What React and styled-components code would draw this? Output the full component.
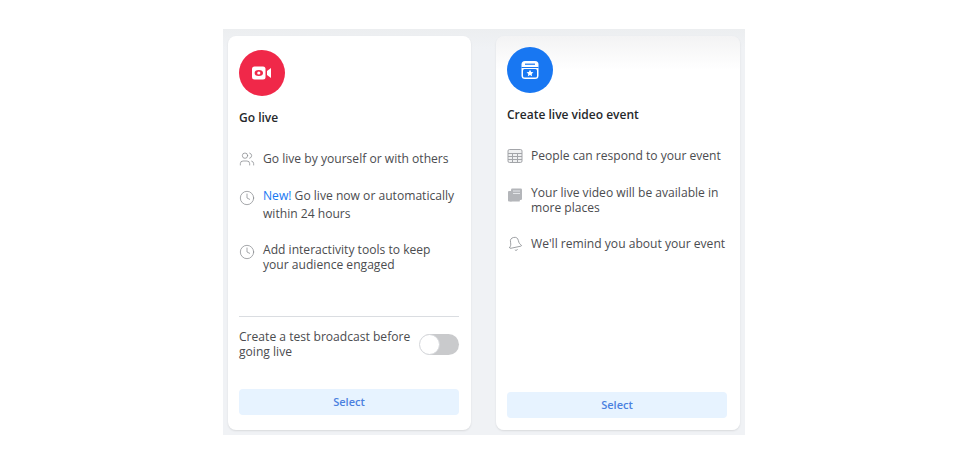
import React from 'react';
import styled, { createGlobalStyle } from 'styled-components';
import { Users, Clock, Bell } from 'lucide-react';

const GlobalStyle = createGlobalStyle`
    html, body {
        margin: 0;
        padding: 0;
        background-color: #ffffff;
    }
    body {
        font-family: "Open Sans", "Noto Sans", "Liberation Sans", sans-serif;
    }
`;

const Page = styled.div`
    width: 968px;
    height: 476px;
    padding-top: 29px;
    box-sizing: border-box;
    display: flex;
    justify-content: center;
    align-items: flex-start;
`;
const Stage = styled.div`
    width: 522px;
    height: 406px;
    box-sizing: border-box;
    padding: 7px 5px 5px;
    display: flex;
    gap: 25px;
    background: linear-gradient(#eceef0 0, #f0f2f5 20px);
`;
const Card = styled.div`
    width: ${props => props.$width}px;
    box-sizing: border-box;
    padding: ${props => props.$top}px ${props => props.$right}px ${props => props.$bottom}px 11px;
    display: flex;
    flex-direction: column;
    border-radius: 8px;
    background: ${props => props.$shaded ? 'linear-gradient(#f3f3f4 0, #ffffff 34px)' : '#ffffff'};
    box-shadow: 0 1px 2px rgba(0, 0, 0, 0.1);
`;
const Badge = styled.div`
    width: 46px;
    height: 46px;
    flex-shrink: 0;
    border-radius: 50%;
    display: flex;
    align-items: center;
    justify-content: center;
    background-color: ${props => props.$color};
`;
const Title = styled.div`
    margin-top: 14px;
    font-size: 12px;
    line-height: 16px;
    font-weight: 600;
    color: #26282b;
`;
const Rows = styled.div`
    margin-top: 25px;
    display: flex;
    flex-direction: column;
    gap: ${props => props.$gap}px;
`;
const Row = styled.div`
    display: flex;
    gap: 8px;
    font-size: 12.1px;
    line-height: ${props => props.$lineHeight || 15}px;
    color: #4b4c4f;
`;
const IconSlot = styled.div`
    width: 16px;
    height: 16px;
    flex-shrink: 0;
    margin-top: ${props => props.$top || 0}px;
    color: #85888c;
    transform: rotate(${props => props.$tilt || 0}deg);
`;
const New = styled.span`
    color: #1877f2;
`;
const Footer = styled.div`
    margin-top: auto;
`;
const Divider = styled.div`
    height: 1px;
    background-color: #dadde1;
`;
const ToggleRow = styled.div`
    margin-top: 12px;
    display: flex;
    align-items: center;
    justify-content: space-between;
    font-size: 12.1px;
    line-height: 15px;
    color: #4b4c4f;
`;
const ToggleText = styled.div`
    width: 178px;
`;
const Toggle = styled.div`
    width: 39px;
    height: 21px;
    flex-shrink: 0;
    border-radius: 11px;
    background-color: #c9cacc;
    display: flex;
    align-items: center;
`;
const Knob = styled.div`
    width: 19px;
    height: 19px;
    box-sizing: content-box;
    border: 1px solid #d4d6da;
    margin-left: -1px;
    border-radius: 50%;
    background-color: #ffffff;
`;
const SelectButton = styled.div`
    height: 24px;
    padding-bottom: 2px;
    margin-top: ${props => props.$top || 0}px;
    border-radius: 4px;
    display: flex;
    align-items: center;
    justify-content: center;
    font-size: 11px;
    font-weight: 600;
    color: #4b80e0;
    background-color: #e7f3ff;
`;

function CameraIcon () {
    return (
        <svg width="20" height="14" viewBox="0 0 20 14">
            <rect x="0" y="0.5" width="13.5" height="13" rx="2.5" fill="#fff" />
            <ellipse cx="6.8" cy="7" rx="4.2" ry="3" fill="#f02849" />
            <circle cx="6.8" cy="7" r="1.6" fill="#fff" />
            <path d="M15 5 L19 2 V12 L15 9 Z" fill="#fff" />
        </svg>
    );
}

function EventIcon () {
    return (
        <svg width="20" height="20" viewBox="0 0 20 20">
            <rect x="1.5" y="1" width="17" height="18" rx="3.5" fill="#fff" />
            <rect x="5" y="3.6" width="10" height="1.2" fill="#1877f2" />
            <rect x="1.5" y="7" width="17" height="1" fill="#1877f2" />
            <rect x="3" y="9" width="14" height="8.6" rx="1.5" fill="#1877f2" />
            <path d="M10 9.8 L11.1 12 L13.4 12.3 L11.7 13.9 L12.1 16.2 L10 15.1 L7.9 16.2 L8.3 13.9 L6.6 12.3 L8.9 12 Z" fill="#fff" />
        </svg>
    );
}

function GridIcon () {
    return (
        <svg width="16" height="16" viewBox="0 0 16 16" fill="none" stroke="#a3a5a9">
            <rect x="1" y="1.5" width="14" height="13" rx="1.5" fill="#eff0f1" />
            <path d="M1 5.5 H15 M1 8.5 H15 M1 11.5 H15 M5.5 5.5 V14.5 M10.5 5.5 V14.5" />
        </svg>
    );
}

function PagesIcon () {
    return (
        <svg width="16" height="16" viewBox="0 0 16 16" fill="#b4b6ba">
            <rect x="4" y="1.5" width="11" height="11.5" rx="1.2" />
            <rect x="1" y="4" width="4" height="10.5" rx="1" />
            <rect x="3" y="13" width="10" height="1.5" rx="0.7" />
            <rect x="6" y="3.5" width="7" height="1" fill="#e4e6e9" />
            <rect x="6" y="6" width="7" height="1" fill="#e4e6e9" />
        </svg>
    );
}

const lineIcon = { size: 16, strokeWidth: 1.1 };

function App () {
    return (
        <Page>
            <GlobalStyle />
            <Stage>
                <Card $width={243} $top={14} $right={12} $bottom={15}>
                    <Badge $color="#f02849"><CameraIcon /></Badge>
                    <Title>Go live</Title>
                    <Rows $gap={19.5}>
                        <Row>
                            <IconSlot><Users {...lineIcon} /></IconSlot>
                            <div>Go live by yourself or with others</div>
                        </Row>
                        <Row $lineHeight={18}>
                            <IconSlot $top={3}><Clock {...lineIcon} /></IconSlot>
                            <div><New>New!</New> Go live now or automatically within 24 hours</div>
                        </Row>
                        <Row>
                            <IconSlot $top={2}><Clock {...lineIcon} /></IconSlot>
                            <div>Add interactivity tools to keep your audience engaged</div>
                        </Row>
                    </Rows>
                    <Footer>
                        <Divider />
                        <ToggleRow>
                            <ToggleText>Create a test broadcast before going live</ToggleText>
                            <Toggle><Knob /></Toggle>
                        </ToggleRow>
                        <SelectButton $top={30}>Select</SelectButton>
                    </Footer>
                </Card>
                <Card $width={244} $top={11} $right={13} $bottom={12} $shaded>
                    <Badge $color="#1877f2"><EventIcon /></Badge>
                    <Title>Create live video event</Title>
                    <Rows $gap={21}>
                        <Row>
                            <IconSlot><GridIcon /></IconSlot>
                            <div>People can respond to your event</div>
                        </Row>
                        <Row>
                            <IconSlot $top={2}><PagesIcon /></IconSlot>
                            <div>Your live video will be available in more places</div>
                        </Row>
                        <Row>
                            <IconSlot $tilt={-12}><Bell {...lineIcon} /></IconSlot>
                            <div>We'll remind you about your event</div>
                        </Row>
                    </Rows>
                    <Footer>
                        <SelectButton>Select</SelectButton>
                    </Footer>
                </Card>
            </Stage>
        </Page>
    );
}

export default App;
